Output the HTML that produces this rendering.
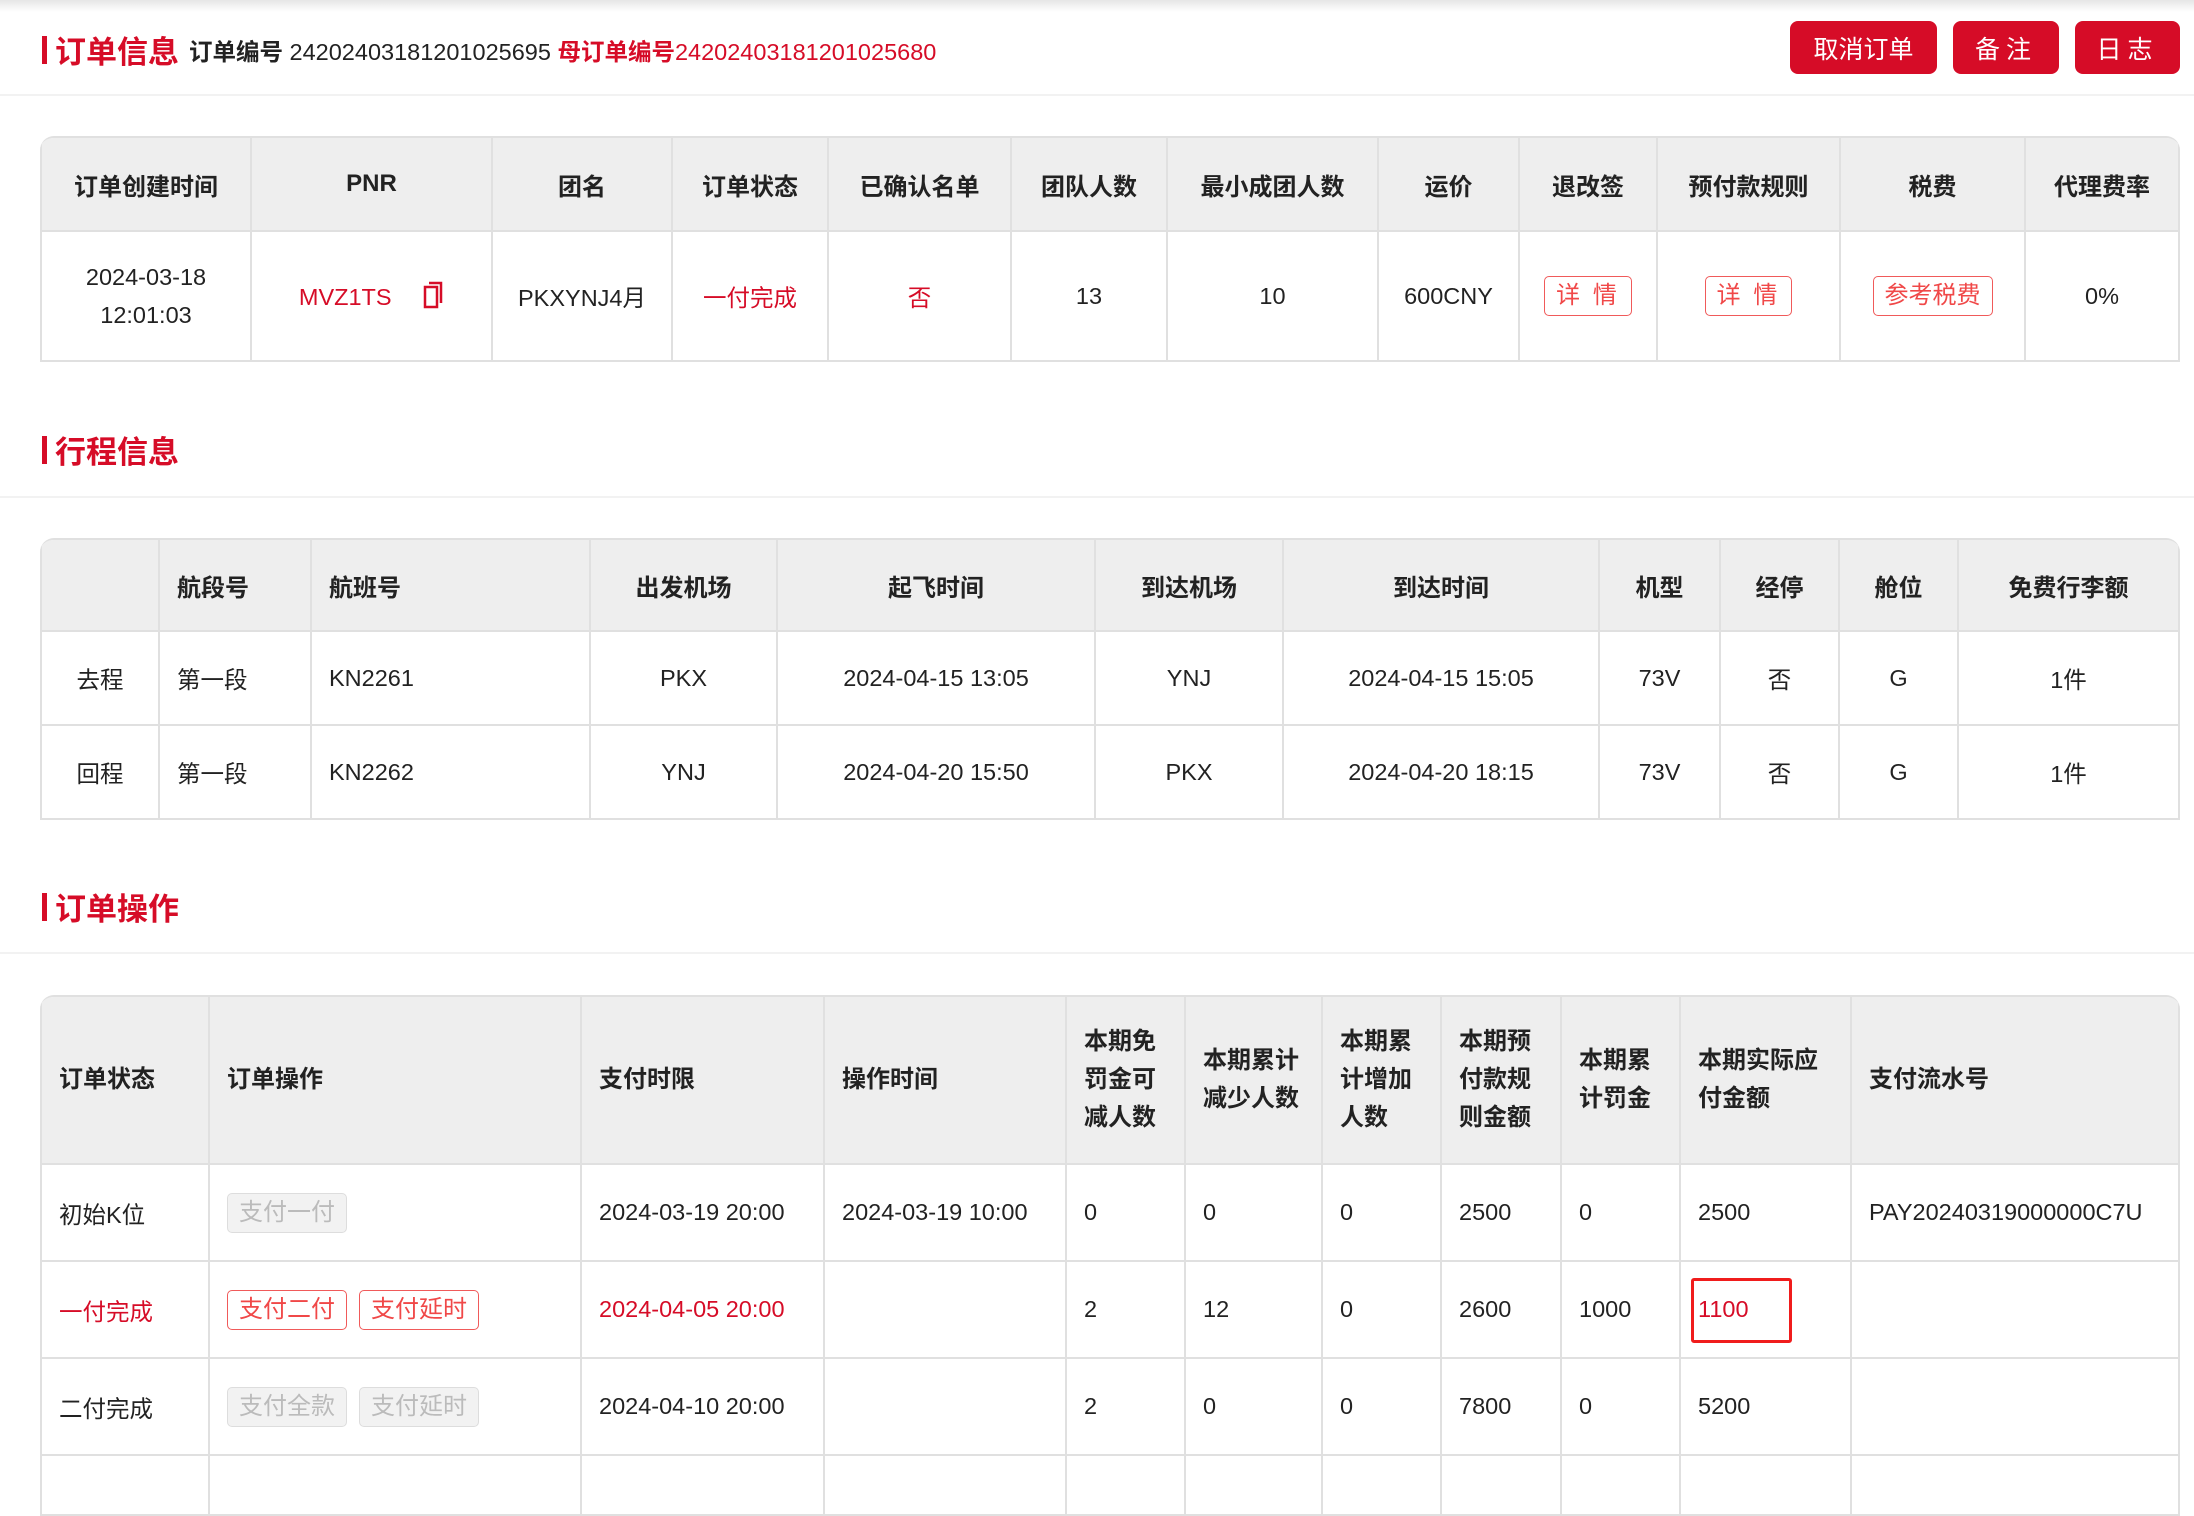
<!DOCTYPE html>
<html><head><meta charset="utf-8"><style>
*{box-sizing:border-box;margin:0;padding:0}
body{width:2194px;height:1471px;overflow:hidden;background:#fff;font-family:"Liberation Sans","Noto Sans CJK SC",sans-serif;color:#222;position:relative}
.topsh{position:absolute;left:0;top:0;width:2194px;height:12px;background:linear-gradient(#e6e6e6,#fff)}
.title{position:absolute;left:42px;display:flex;align-items:center;white-space:nowrap}
.bar{width:5px;height:28px;background:#d60c27;margin-right:8px}
.title h1{font-size:31px;color:#d60c27;font-weight:bold}
.hr{position:absolute;left:0;width:2194px;height:2px;background:#f2f2f2}
.btn{position:absolute;top:21px;height:53px;background:#d60c27;color:#fff;font-size:25px;border-radius:8px;display:flex;align-items:center;justify-content:center}
table{position:absolute;left:40px;border-collapse:separate;border-spacing:0;table-layout:fixed;font-size:23.5px;border-radius:14px 14px 0 0;overflow:hidden;border-top:2px solid #e0e0e0}
th{background:#eeeeee;font-weight:bold;color:#222;font-size:24px}
th,td{border-right:2px solid #e0e0e0;border-bottom:2px solid #e0e0e0;text-align:center;vertical-align:middle}
th:first-child,td:first-child{border-left:2px solid #e0e0e0}
.red{color:#d60c27}
.ob{display:inline-block;border:1.5px solid #f05a5a;color:#f04848;border-radius:5px;padding:0 11px;height:40px;line-height:38px;font-size:24px;letter-spacing:3px}
.t3 th,.t3 td{text-align:left;padding-left:17px;padding-right:17px}
.t3 th{line-height:38px}
.gb,.rb{display:inline-block;height:40px;line-height:38px;padding:0 11px;border-radius:5px;font-size:24px;margin-right:12px}
.gb{background:#f2f2f2;border:1.5px solid #ddd;color:#bbb}
.rb{border:1.5px solid #f05a5a;color:#f04848}
</style></head><body>
<div class="topsh"></div>
<div class="title" style="top:27px"><div class="bar"></div><h1>订单信息</h1>
<span style="font-size:23.5px;margin-left:10px"><b>订单编号</b> 24202403181201025695 <b class="red">母订单编号</b><span class="red">24202403181201025680</span></span></div>
<div class="btn" style="left:1790px;width:147px">取消订单</div>
<div class="btn" style="left:1953px;width:106px;letter-spacing:6px">备注</div>
<div class="btn" style="left:2075px;width:105px;letter-spacing:6px">日志</div>
<div class="hr" style="top:94px"></div>

<table style="top:136px;width:2140px">
<colgroup><col style="width:212px"><col style="width:241px"><col style="width:180px"><col style="width:156px"><col style="width:183px"><col style="width:156px"><col style="width:211px"><col style="width:141px"><col style="width:138px"><col style="width:183px"><col style="width:185px"><col style="width:154px"></colgroup>
<tr style="height:94px"><th>订单创建时间</th><th>PNR</th><th>团名</th><th>订单状态</th><th>已确认名单</th><th>团队人数</th><th>最小成团人数</th><th>运价</th><th>退改签</th><th>预付款规则</th><th>税费</th><th>代理费率</th></tr>
<tr style="height:130px"><td style="line-height:38px">2024-03-18<br>12:01:03</td><td class="red">MVZ1TS <svg width="22" height="28" viewBox="0 0 22 28" style="vertical-align:-4px;margin-left:24px"><path d="M7 2h12v20" fill="none" stroke="#d60c27" stroke-width="2.5"/><rect x="3" y="6" width="12" height="20" fill="none" stroke="#d60c27" stroke-width="2.5"/></svg></td><td>PKXYNJ4月</td><td class="red">一付完成</td><td class="red">否</td><td>13</td><td>10</td><td>600CNY</td><td><span class="ob">详 情</span></td><td><span class="ob">详 情</span></td><td><span class="ob" style="letter-spacing:0">参考税费</span></td><td>0%</td></tr>
</table>

<div class="title" style="top:427px"><div class="bar"></div><h1>行程信息</h1></div>
<div class="hr" style="top:496px"></div>
<table style="top:538px;width:2140px">
<colgroup><col style="width:120px"><col style="width:152px"><col style="width:279px"><col style="width:187px"><col style="width:318px"><col style="width:188px"><col style="width:316px"><col style="width:121px"><col style="width:119px"><col style="width:119px"><col style="width:221px"></colgroup>
<tr style="height:92px"><th></th><th style="text-align:left;padding-left:17px">航段号</th><th style="text-align:left;padding-left:17px">航班号</th><th>出发机场</th><th>起飞时间</th><th>到达机场</th><th>到达时间</th><th>机型</th><th>经停</th><th>舱位</th><th>免费行李额</th></tr>
<tr style="height:94px"><td>去程</td><td style="text-align:left;padding-left:17px">第一段</td><td style="text-align:left;padding-left:17px">KN2261</td><td>PKX</td><td>2024-04-15 13:05</td><td>YNJ</td><td>2024-04-15 15:05</td><td>73V</td><td>否</td><td>G</td><td>1件</td></tr>
<tr style="height:94px"><td>回程</td><td style="text-align:left;padding-left:17px">第一段</td><td style="text-align:left;padding-left:17px">KN2262</td><td>YNJ</td><td>2024-04-20 15:50</td><td>PKX</td><td>2024-04-20 18:15</td><td>73V</td><td>否</td><td>G</td><td>1件</td></tr>
</table>

<div class="title" style="top:884px"><div class="bar"></div><h1>订单操作</h1></div>
<div class="hr" style="top:952px"></div>
<table class="t3" style="top:995px;width:2140px">
<colgroup><col style="width:170px"><col style="width:372px"><col style="width:243px"><col style="width:242px"><col style="width:119px"><col style="width:137px"><col style="width:119px"><col style="width:120px"><col style="width:119px"><col style="width:171px"><col style="width:328px"></colgroup>
<tr style="height:168px"><th>订单状态</th><th>订单操作</th><th>支付时限</th><th>操作时间</th><th>本期免罚金可减人数</th><th>本期累计减少人数</th><th>本期累计增加人数</th><th>本期预付款规则金额</th><th>本期累计罚金</th><th>本期实际应付金额</th><th>支付流水号</th></tr>
<tr style="height:97px"><td>初始K位</td><td><span class="gb">支付一付</span></td><td>2024-03-19 20:00</td><td>2024-03-19 10:00</td><td>0</td><td>0</td><td>0</td><td>2500</td><td>0</td><td>2500</td><td>PAY20240319000000C7U</td></tr>
<tr style="height:97px"><td class="red">一付完成</td><td><span class="rb">支付二付</span><span class="rb">支付延时</span></td><td class="red">2024-04-05 20:00</td><td></td><td>2</td><td>12</td><td>0</td><td>2600</td><td>1000</td><td style="position:relative"><span style="position:absolute;left:10px;top:16px;width:101px;height:65px;border:3px solid #f01c1c;border-radius:3px"></span><span class="red">1100</span></td><td></td></tr>
<tr style="height:97px"><td>二付完成</td><td><span class="gb">支付全款</span><span class="gb">支付延时</span></td><td>2024-04-10 20:00</td><td></td><td>2</td><td>0</td><td>0</td><td>7800</td><td>0</td><td>5200</td><td></td></tr>
<tr style="height:60px"><td></td><td></td><td></td><td></td><td></td><td></td><td></td><td></td><td></td><td></td><td></td></tr>
</table>
</body></html>
